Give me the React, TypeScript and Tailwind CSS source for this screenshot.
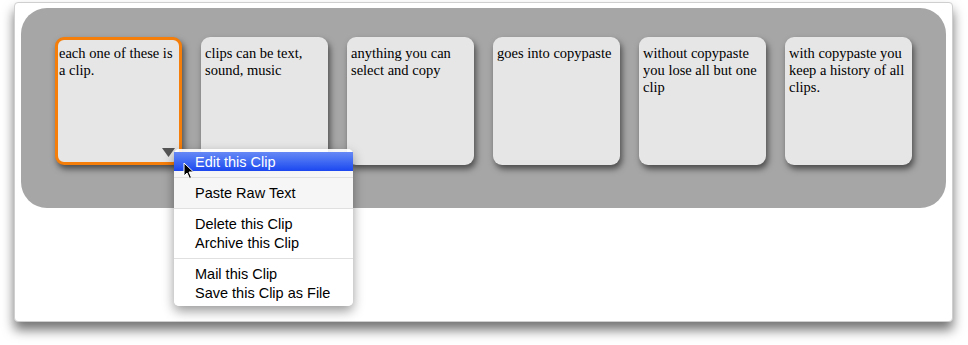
import React from 'react';

const clips = [
  'each one of these is a clip.',
  'clips can be text, sound, music',
  'anything you can select and copy',
  'goes into copypaste',
  'without copypaste you lose all but one clip',
  'with copypaste you keep a history of all clips.',
];

const menuGroups = [
  ['Edit this Clip'],
  ['Paste Raw Text'],
  ['Delete this Clip', 'Archive this Clip'],
  ['Mail this Clip', 'Save this Clip as File'],
];

const Clip: React.FC<{ text: string; selected?: boolean }> = ({ text, selected }) => (
  <div
    className={`relative w-[127px] h-[128px] shrink-0 rounded-[9px] bg-[#e6e6e6] shadow-[2px_4px_6px_rgba(0,0,0,0.55)] text-[14.5px] leading-[17px] text-black ${
      selected ? 'border-[3px] border-[#f57d0a] px-px pt-[5px]' : 'px-[4px] pt-[8px]'
    }`}
    style={{ fontFamily: '"Liberation Serif", "Times New Roman", serif' }}
  >
    {text}
    {selected && (
      // menu trigger
      <svg className="absolute right-[4px] bottom-[5px]" width="13" height="9" viewBox="0 0 13 9">
        <path d="M0 0 H13 L6.5 9 Z" fill="#555" />
      </svg>
    )}
  </div>
);

const ContextMenu: React.FC = () => (
  <div
    className="absolute left-[174px] top-[149px] w-[179px] pt-[3px] pb-[4px] rounded-[5px] bg-white/90 shadow-[0_5px_12px_rgba(0,0,0,0.4)] text-[14.5px] text-black"
    style={{ fontFamily: '"Liberation Sans", Arial, sans-serif' }}
  >
    {menuGroups.map((group, gi) => (
      <div key={gi}>
        {gi > 0 && <div className="mt-[6px] mb-[5px] h-px bg-[#e0e0e0]" />}
        {group.map((item) => (
          <div
            key={item}
            className={`h-[19px] leading-[20px] pl-[21px] ${
              gi === 0 ? 'bg-gradient-to-b from-[#6688f5] to-[#1c45ef] text-white' : ''
            }`}
          >
            {item}
          </div>
        ))}
      </div>
    ))}
  </div>
);

const Cursor: React.FC = () => (
  <svg className="absolute left-[183px] top-[162px]" width="12" height="18" viewBox="0 0 12 18">
    <path
      d="M1 1 L1 14 L4 11 L6.5 16.5 L8.5 15.5 L6 10 L10.5 10 Z"
      fill="#000"
      stroke="#fff"
      strokeWidth="1"
      strokeLinejoin="round"
    />
  </svg>
);

export default function App() {
  return (
    <div className="relative w-[968px] h-[345px] bg-white pl-[14px] pt-[2px]">
      <div className="w-[939px] h-[320px] rounded-[4px] border border-[#cfcfcf] bg-white pl-[6px] pt-[5px] shadow-[0_8px_12px_rgba(0,0,0,0.55)]">
        <div className="w-[925px] h-[200px] rounded-[26px] bg-[#a6a6a6] pl-[34px] pt-[29px]">
          <div className="flex gap-[19px]">
            {clips.map((c, i) => (
              <Clip key={i} text={c} selected={i === 0} />
            ))}
          </div>
        </div>
      </div>
      <ContextMenu />
      <Cursor />
    </div>
  );
}
